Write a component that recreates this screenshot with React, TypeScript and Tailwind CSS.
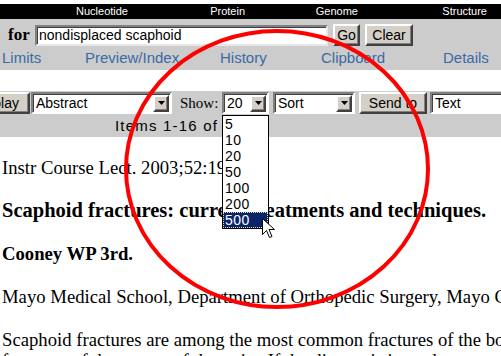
import React from 'react';

const sans = { fontFamily: '"Liberation Sans", Arial, sans-serif' };

const Arrow: React.FC = () => (
  <div className="flex h-[17px] w-[16px] items-center justify-center border-2 border-t-[#ffffff] border-l-[#ffffff] border-b-[#404040] border-r-[#404040] bg-[#d4d0c8] shadow-[inset_-1px_-1px_0_#808080]">
    <svg width="7" height="4" viewBox="0 0 7 4">
      <path d="M0 0h7L3.5 4z" fill="#000" />
    </svg>
  </div>
);

const Select: React.FC<{ label: string; w: string }> = ({ label, w }) => (
  <div
    className={`flex h-[22px] shrink-0 items-center justify-between border-2 border-t-[#808080] border-l-[#808080] border-b-[#ffffff] border-r-[#ffffff] bg-white pl-[3px] pr-[1px] text-[14px] text-black shadow-[inset_1px_1px_0_#404040] ${w}`}
    style={sans}
  >
    <span>{label}</span>
    <Arrow />
  </div>
);

const Button: React.FC<{ children: React.ReactNode; className?: string }> = ({ children, className = '' }) => (
  <div
    className={`flex h-[22px] shrink-0 items-center justify-center border-2 border-t-[#ffffff] border-l-[#ffffff] border-b-[#404040] border-r-[#404040] bg-[#d4d0c8] text-[14px] text-black shadow-[inset_-1px_-1px_0_#808080] ${className}`}
    style={sans}
  >
    {children}
  </div>
);

const App: React.FC = () => {
  const tabs = [
    { name: 'Nucleotide', w: 'w-[128px]' },
    { name: 'Protein', w: 'w-[117px]' },
    { name: 'Genome', w: 'w-[113px]' },
    { name: 'Structure', w: 'w-[129px]' },
  ];
  const links = [
    { name: 'Limits', w: 'w-[83px]' },
    { name: 'Preview/Index', w: 'w-[135px]' },
    { name: 'History', w: 'w-[101px]' },
    { name: 'Clipboard', w: 'w-[122px]' },
    { name: 'Details', w: 'w-[60px]' },
  ];
  const options = ['5', '10', '20', '50', '100', '200', '500'];

  return (
    <div className="relative h-[356px] w-[501px] overflow-hidden bg-white">
      {/* top bar */}
      <div className="mt-[4px] flex h-[15px] items-center bg-black text-[11px] text-white" style={sans}>
        {tabs.map((t) => (
          <div key={t.name} className={`shrink-0 text-right ${t.w}`}>
            {t.name}
          </div>
        ))}
      </div>

      {/* search area */}
      <div className="h-[51px] bg-[#cccccc]">
        <div className="flex h-[22px] translate-y-[5px] items-center">
          <span
            className="ml-[8px] w-[27px] shrink-0 text-[17px] font-bold text-black"
            style={{ fontFamily: '"Liberation Serif", "Times New Roman", serif' }}
          >
            for
          </span>
          <div
            className="flex h-[21px] w-[293px] shrink-0 items-center border-2 border-t-[#808080] border-l-[#808080] border-b-[#e8e8e8] border-r-[#e8e8e8] bg-white pl-[2px] text-[14px] text-black shadow-[inset_1px_1px_0_#404040]"
            style={sans}
          >
            nondisplaced scaphoid
          </div>
          <Button className="ml-[5px] w-[27px]">Go</Button>
          <Button className="ml-[5px] w-[48px]">Clear</Button>
        </div>
        <div className="mt-[8px] flex text-[15px] leading-[18px] text-[#3a6aa6]" style={sans}>
          <div className="w-[2px] shrink-0" />
          {links.map((l) => (
            <div key={l.name} className={`shrink-0 ${l.w}`}>
              {l.name}
            </div>
          ))}
        </div>
      </div>

      {/* display row */}
      <div className="mt-[21px] h-[46px] bg-[#cccccc]">
        <div className="flex items-center pt-[1px]">
          <Button className="-ml-[38px] w-[68px] !justify-end pr-[9px]">Display</Button>
          <Select label="Abstract" w="ml-[1px] w-[141px]" />
          <span
            className="ml-[8px] w-[42px] shrink-0 text-[15px] text-black"
            style={{ fontFamily: '"Liberation Serif", "Times New Roman", serif' }}
          >
            Show:
          </span>
          <Select label="20" w="w-[47px]" />
          <Select label="Sort" w="ml-[4px] w-[82px]" />
          <Button className="ml-[4px] w-[68px]">Send to</Button>
          <Select label="Text" w="ml-[3px] w-[100px]" />
        </div>
        <div className="mt-[2px] pl-[115px] text-[15px] leading-[18px] tracking-[1.2px] text-black" style={sans}>
          Items 1-16 of 16
        </div>
      </div>

      {/* abstract body */}
      <div
        className="px-[2px] pt-[20px] text-black"
        style={{ fontFamily: '"Liberation Serif", "Times New Roman", serif' }}
      >
        <p className="mb-[22px] whitespace-nowrap text-[18.7px] leading-[21px]">Instr Course Lect. 2003;52:197.</p>
        <p className="mb-[22px] whitespace-nowrap text-[20.5px] font-bold leading-[21px]">
          Scaphoid fractures: current treatments and techniques.
        </p>
        <p className="mb-[22px] whitespace-nowrap text-[18.7px] font-bold leading-[21px]">Cooney WP 3rd.</p>
        <p className="mb-[22px] whitespace-nowrap text-[18.7px] leading-[21px]">
          Mayo Medical School, Department of Orthopedic Surgery, Mayo Clinic, Rochester, MN, USA.
        </p>
        <p className="whitespace-nowrap text-[18.7px] leading-[21px]">
          Scaphoid fractures are among the most common fractures of the bones
          <br />
          fractures of the carpus of the wrist. If the diagnosis is made, treatment must be established
        </p>
      </div>

      {/* open dropdown list */}
      <div
        className="absolute left-[222px] top-[115px] w-[47px] border border-black bg-white text-[14px] leading-[16px] tracking-[0.5px] text-black"
        style={sans}
      >
        {options.map((o) =>
          o === '500' ? (
            <div key={o} className="h-[16px] bg-[#0a246a] pl-[2px] text-white outline-1 -outline-offset-1 outline-dotted outline-[#e8e0a0]">
              {o}
            </div>
          ) : (
            <div key={o} className="h-[16px] pl-[2px]">
              {o}
            </div>
          )
        )}
      </div>

      {/* mouse cursor */}
      <svg className="absolute left-[262px] top-[218px]" width="13" height="21" viewBox="0 0 13 21">
        <path d="M0.5 0.5v16l4-4 3 7 2.5-1-3-7h5.5z" fill="#fff" stroke="#000" strokeWidth="1" />
      </svg>

      {/* red annotation circle */}
      <svg className="pointer-events-none absolute left-0 top-0" width="501" height="356" viewBox="0 0 501 356">
        <ellipse cx="277" cy="169" rx="151" ry="138" fill="none" stroke="#ff0000" strokeWidth="4" />
      </svg>
    </div>
  );
};

export default App;
